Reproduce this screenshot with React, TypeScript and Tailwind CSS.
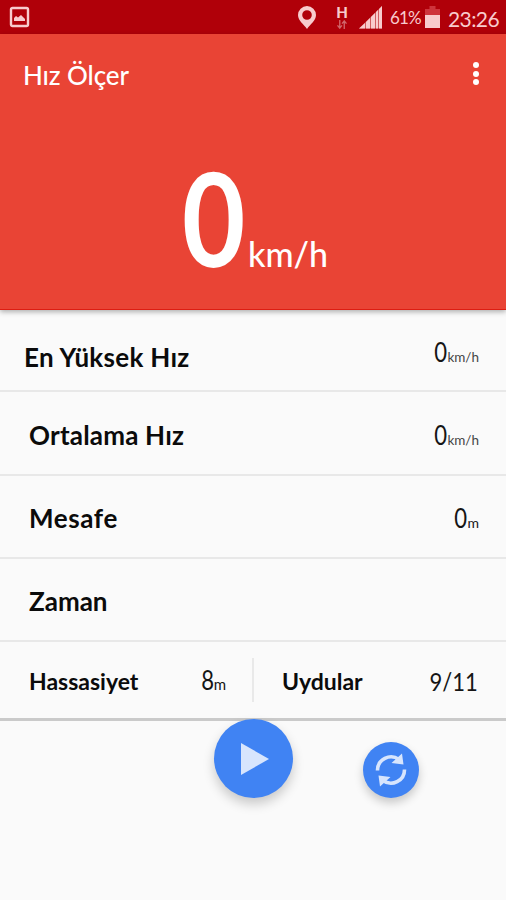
import type { ReactNode } from 'react'

interface StatRowProps {
  label: string
  labelClass: string
  className: string
  children?: ReactNode
}

function StatRow({ label, labelClass, className, children }: StatRowProps) {
  return (
    <div className={`flex items-center justify-between border-b-2 border-[#e8e8e8] pr-[27px] ${className}`}>
      <span className={`text-[26px] leading-8 font-bold whitespace-nowrap ${labelClass}`}>{label}</span>
      {children}
    </div>
  )
}

function Reading({ value, unit, unitClass }: { value: string; unit: string; unitClass: string }) {
  return (
    <span className="flex items-baseline leading-8 text-[#151515]">
      <span className="text-[26px] w-[13px] inline-flex justify-center"><span className="scale-x-[0.85]">{value}</span></span>
      <span className={unitClass}>{unit}</span>
    </span>
  )
}

function StatusBar() {
  return (
    <div className="h-[34px] bg-[#b00009] flex items-center text-[#f8cbcd] pl-[9px] pr-[7px]">
      <svg width="21" height="22" viewBox="0 0 21 22" fill="none">
        <rect x="2" y="2" width="17" height="18" rx="1.5" stroke="currentColor" strokeWidth="2.4" />
        <path d="M5 15v-3l2-2 2 1.5L12 9l4 4v2z" fill="currentColor" />
      </svg>
      <div className="flex-1" />
      <svg width="18" height="23" viewBox="0 0 18 23" className="mr-5">
        <path fill="currentColor" fillRule="evenodd" d="M9 0a9 9 0 0 0-9 9c0 5.500 6 9.500 9 14 3-4.500 9-8.500 9-14a9 9 0 0 0-9-9zm0 4.200a4.800 4.800 0 1 1 0 9.600 4.800 4.800 0 0 1 0-9.600z" />
      </svg>
      <div className="flex flex-col items-center w-[12px] mr-[11px]">
        <span className="text-[15px] leading-[13px] font-black">H</span>
        <svg width="12" height="9" viewBox="0 0 12 10" fill="none" stroke="#d0666b" strokeWidth="1.5" className="mt-px">
          <path d="M3.500 0v8M1 6l2.500 3L6 6M8.500 10V2M6 4l2.500-3L11 4" />
        </svg>
      </div>
      <svg width="24" height="23" viewBox="0 0 24 23" fill="currentColor" className="mr-[7px]">
        <path d="M0 22.500 6 17v5.500zM7 16l4-4v10.500H7zM12 11l4-4v15.500h-4z" />
        <path d="M17 6l2-2v18.500h-2zM20 3l3-3v22.500h-3z" />
        <path d="M0 22.500 23 0v22.500z" opacity=".45" />
      </svg>
      <span className="text-[17px] tracking-[-0.8px] w-[31px] mr-[4px] pt-[2px] whitespace-nowrap">61%</span>
      <svg width="15" height="22" viewBox="0 0 15 22" className="mr-[8px]">
        <path d="M4.500 0h6v3H15v6H0V3h4.500z" fill="#ce343c" />
        <path d="M0 9h15v13H0z" fill="currentColor" />
      </svg>
      <span className="text-[21px] leading-8 tracking-[-0.6px] w-[51px] pt-[3px] whitespace-nowrap">23:26</span>
    </div>
  )
}

export default function App() {
  return (
    <div className="h-[900px] w-[506px] overflow-hidden bg-[#fafafa] text-[#0b0b0b] font-['Lato',sans-serif]">
      <StatusBar />

      {/* SPEED HEADER */}
      <div className="relative z-10 h-[276px] bg-[#e94435] border-b border-[#dd1d12] text-white shadow-[0_2px_5px_rgba(0,0,0,0.3)]">
        <div className="flex items-center justify-between h-[82px] pl-[23px] pr-[27px]">
          <span className="text-[26px] leading-8 -tracking-[0.1px] font-medium">Hız Ölçer</span>
          <div className="flex flex-col gap-[2.5px] pb-[3px]">
            <span className="size-[6px] rounded-full bg-white" />
            <span className="size-[6px] rounded-full bg-white" />
            <span className="size-[6px] rounded-full bg-white" />
          </div>
        </div>
        <div className="flex items-baseline pl-[180px] pt-[39px] leading-[124px]">
          <span className="text-[130px] w-[68px] font-bold inline-flex justify-center"><span className="scale-x-[0.84]">0</span></span>
          <span className="text-[34px] font-medium">km/h</span>
        </div>
      </div>

      <StatRow label="En Yüksek Hız" labelClass="pl-6 pt-3.5 tracking-[0.3px]" className="h-[82px]">
        <span className="pt-[8px]"><Reading value="0" unit="km/h" unitClass="text-[13.5px] text-[#444]" /></span>
      </StatRow>
      <StatRow label="Ortalama Hız" labelClass="pl-[29px] pt-[3px] tracking-[0.2px]" className="h-[84px]">
        <span className="pt-[8px]"><Reading value="0" unit="km/h" unitClass="text-[13.5px] text-[#444]" /></span>
      </StatRow>
      <StatRow label="Mesafe" labelClass="pl-[29px] pt-[3px] tracking-[0.6px]" className="h-[83px]">
        <span className="pt-[7px]"><Reading value="0" unit="m" unitClass="text-[14px]" /></span>
      </StatRow>
      <StatRow label="Zaman" labelClass="pl-[29px] pt-[3px]" className="h-[83px]" />

      {/* ACCURACY + SATELLITES */}
      <div className="flex items-center h-[79px] border-b-[3px] border-[#cacaca]">
        <div className="w-[254px] h-11 flex items-center justify-between pl-[29px] pr-[26px] border-r-2 border-[#e9e9e9]">
          <span className="text-[23px] font-bold pt-[2px]">Hassasiyet</span>
          <span className="pt-1"><Reading value="8" unit="m" unitClass="text-[15px]" /></span>
        </div>
        <div className="flex-1 flex items-center justify-between pl-7 pr-[28px]">
          <span className="text-[23px] font-bold pt-[2px]">Uydular</span>
          <span className="text-[25px] text-[#151515] pt-[3px] origin-right scale-x-[0.88]">9/11</span>
        </div>
      </div>

      {/* CONTROLS */}
      <div className="relative flex items-start pl-[214px] gap-[70px] -mt-[2px]">
        <button className="size-[79px] rounded-full bg-[#4083f3] flex items-center justify-center shadow-[0_6px_12px_rgba(0,0,0,0.2)]">
          <svg width="28" height="32" viewBox="0 0 28 32" className="ml-[3px]">
            <path d="M0 0 28 16 0 32z" fill="#d7e5fd" />
          </svg>
        </button>
        <button className="size-[56px] mt-[23px] rounded-full bg-[#4083f3] flex items-center justify-center shadow-[0_5px_10px_rgba(0,0,0,0.2)]">
          <svg width="34" height="36" viewBox="0 0 34 36" fill="none">
            <path d="M3.500 18.500A13.500 13.500 0 0 1 25 7.500M30.500 17.500A13.500 13.500 0 0 1 9 28.500" stroke="#d7e5fd" strokeWidth="3.6" />
            <path d="M28 1.500 29.500 12.500 17.500 11zM6 34.500 4.500 23.500l12 1.500z" fill="#d7e5fd" />
          </svg>
        </button>
      </div>
    </div>
  )
}
